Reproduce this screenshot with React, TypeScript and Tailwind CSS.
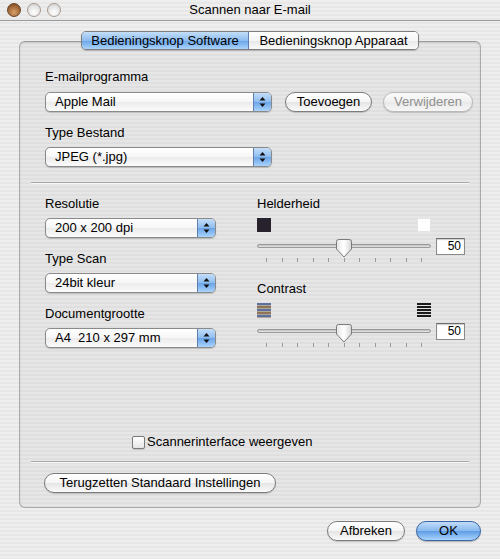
import React from "react";

const font = "font-['Liberation_Sans',Arial,sans-serif]";

function Arrows() {
  return (
    <svg width="7" height="12" viewBox="0 0 7 12">
      <polygon points="3.5,1 6.5,4.5 0.5,4.5" fill="#111" />
      <polygon points="0.5,7.5 6.5,7.5 3.5,11" fill="#111" />
    </svg>
  );
}

function Popup({ label, w }: { label: string; w: string }) {
  return (
    <div
      className={`flex h-[20px] ${w} overflow-hidden rounded-[5px] border border-[#8a8a8a] bg-[image:linear-gradient(#ffffff,#f6f6f6_50%,#ebebeb_51%,#fbfbfb)] shadow-[0_1px_1px_rgba(0,0,0,0.18)]`}
    >
      <span className="flex-1 whitespace-pre pl-[9px] text-[13px] leading-[18px]">{label}</span>
      <span className="flex w-[18px] items-center justify-center border-l border-[#5f7fae] bg-[image:linear-gradient(#c4def8,#8dbcf0_50%,#6aa4e8_51%,#a9d3fb)]">
        <Arrows />
      </span>
    </div>
  );
}

function PushButton({
  children,
  w,
  disabled,
}: {
  children: React.ReactNode;
  w: string;
  disabled?: boolean;
}) {
  return (
    <div
      className={`flex h-[20px] ${w} items-center justify-center rounded-full border text-[13px] leading-[18px] shadow-[0_1px_1px_rgba(0,0,0,0.18)] ${
        disabled
          ? "border-[#b9b9b9] bg-[image:linear-gradient(#fafafa,#f1f1f1_50%,#e9e9e9_51%,#f6f6f6)] text-[#8f8f8f]"
          : "border-[#7c7c7c] bg-[image:linear-gradient(#ffffff,#f5f5f5_50%,#e5e5e5_51%,#fafafa)] text-black"
      }`}
    >
      {children}
    </div>
  );
}

function Separator() {
  return <div className="mx-[11px] h-[2px] border-t border-b border-t-[#a8a8a8] border-b-[#f7f7f7]" />;
}

function Slider() {
  const ticks = [0, 1, 2, 3, 4, 5, 6, 7, 8, 9, 10];
  return (
    <div className="flex flex-col">
      <div className="flex h-[17px] items-center">
        <div className="relative h-[17px] w-[174px]">
          <div className="absolute left-0 right-0 top-[6px] h-[4px] rounded-full border border-[#9a9a9a] bg-[image:linear-gradient(#bdbdbd,#e8e8e8)]" />
          <svg className="absolute left-[79px] top-[1px]" width="16" height="19" viewBox="0 0 16 19">
            <defs>
              <linearGradient id="thumb" x1="0" y1="0" x2="1" y2="0">
                <stop offset="0" stopColor="#e6e6e6" />
                <stop offset="0.5" stopColor="#ffffff" />
                <stop offset="1" stopColor="#d6d6d6" />
              </linearGradient>
            </defs>
            <path
              d="M2.5 0.5 H13.5 Q15.5 0.5 15.5 2.5 V10 L8 18 L0.5 10 V2.5 Q0.5 0.5 2.5 0.5 Z"
              fill="url(#thumb)"
              stroke="#7a7a7a"
            />
          </svg>
        </div>
        <div className="ml-[5px] flex h-[17px] w-[29px] items-center justify-end border border-[#8a8a8a] border-t-[#6e6e6e] bg-white pr-[3px] text-[12px] leading-[15px] shadow-[inset_0_1px_1px_rgba(0,0,0,0.2)]">
          50
        </div>
      </div>
      <div className="mt-[3px] flex w-[174px] justify-between px-[9px]">
        {ticks.map((t) => (
          <span key={t} className="h-[4px] w-px bg-[#9a9a9a]" />
        ))}
      </div>
    </div>
  );
}

function StripeIcon({ dark }: { dark?: boolean }) {
  const rows = [0, 1, 2, 3, 4];
  return (
    <svg width="14" height="15" viewBox="0 0 14 15">
      {rows.map((r) => (
        <rect
          key={r}
          x="0"
          y={r * 3}
          width="14"
          height="2"
          fill={dark ? "#1b1b1b" : r % 2 === 0 ? "#5d6f9c" : "#8f7458"}
        />
      ))}
      {!dark &&
        rows.map((r) => (
          <rect key={"g" + r} x="0" y={r * 3 + 2} width="14" height="1" fill="#b0a69c" />
        ))}
    </svg>
  );
}

function TrafficLight({ red }: { red?: boolean }) {
  return (
    <span
      className={`h-[14px] w-[14px] rounded-full border ${
        red
          ? "border-[#6b4322] bg-[image:radial-gradient(circle_at_50%_70%,#d9a06a,#a46a3a_55%,#6e4320)]"
          : "border-[#a7998f] bg-[image:radial-gradient(circle_at_50%_70%,#ffffff,#e6e6e6_55%,#c9c9c9)]"
      }`}
    />
  );
}

export default function App() {
  return (
    <div
      className={`${font} flex h-[559px] w-[500px] flex-col overflow-hidden bg-[image:repeating-linear-gradient(180deg,#eeeeee_0px,#eeeeee_2px,#e7e7e7_2px,#e7e7e7_4px)] text-black`}
    >
      {/* title bar */}
      <div className="relative flex h-[21px] items-center border-b border-[#9c9c9c] px-[7px]">
        <div className="flex gap-[6px]">
          <TrafficLight red />
          <TrafficLight />
          <TrafficLight />
        </div>
        <div className="absolute inset-0 flex items-center justify-center text-[13px] leading-[16px]">
          Scannen naar E-mail
        </div>
      </div>

      {/* group box */}
      <div className="ml-[19px] mt-[20px] flex h-[467px] w-[462px] flex-col rounded-[6px] border border-[#aaaaaa] border-t-[#9a9a9a] bg-black/[0.03] shadow-[inset_0_1px_2px_rgba(0,0,0,0.1)]">
        <div className="-mt-[11px] flex justify-center">
          <div className="flex h-[19px] overflow-hidden rounded-[5px] border border-[#7d7d7d] text-[13px] leading-[17px] shadow-[0_1px_1px_rgba(0,0,0,0.2)]">
            <div className="flex w-[167px] items-center justify-center border-r border-[#5f7fae] bg-[image:linear-gradient(#c4def8,#8dbcf0_50%,#6aa4e8_51%,#a9d3fb)]">
              Bedieningsknop Software
            </div>
            <div className="flex w-[169px] items-center justify-center bg-[image:linear-gradient(#ffffff,#f5f5f5_50%,#e8e8e8_51%,#fafafa)]">
              Bedieningsknop Apparaat
            </div>
          </div>
        </div>

        <div className="pl-[25px]">
          <div className="mt-[19px] text-[13px] leading-[16px]">E-mailprogramma</div>
          <div className="mt-[7px] flex items-center">
            <Popup label="Apple Mail" w="w-[227px]" />
            <div className="ml-[13px]">
              <PushButton w="w-[87px]">Toevoegen</PushButton>
            </div>
            <div className="ml-[11px]">
              <PushButton w="w-[90px]" disabled>
                Verwijderen
              </PushButton>
            </div>
          </div>
          <div className="mt-[13px] text-[13px] leading-[16px]">Type Bestand</div>
          <div className="mt-[6px]">
            <Popup label="JPEG (*.jpg)" w="w-[227px]" />
          </div>
        </div>

        <div className="mt-[15px]">
          <Separator />
        </div>

        <div className="mt-[12px] flex pl-[25px]">
          <div className="flex w-[212px] flex-col">
            <div className="text-[13px] leading-[16px]">Resolutie</div>
            <div className="mt-[6px]">
              <Popup label="200 x 200 dpi" w="w-[171px]" />
            </div>
            <div className="mt-[13px] text-[13px] leading-[16px]">Type Scan</div>
            <div className="mt-[6px]">
              <Popup label="24bit kleur" w="w-[171px]" />
            </div>
            <div className="mt-[13px] text-[13px] leading-[16px]">Documentgrootte</div>
            <div className="mt-[6px]">
              <Popup label="A4  210 x 297 mm" w="w-[171px]" />
            </div>
          </div>

          <div className="flex flex-col">
            <div className="text-[13px] leading-[16px]">Helderheid</div>
            <div className="mt-[6px] flex w-[174px] justify-between">
              <span className="h-[14px] w-[14px] bg-[#27222c]" />
              <span className="h-[14px] w-[14px] border border-[#e4e4e4] bg-white" />
            </div>
            <div className="mt-[6px]">
              <Slider />
            </div>
            <div className="mt-[19px] text-[13px] leading-[16px]">Contrast</div>
            <div className="mt-[6px] flex w-[174px] justify-between">
              <StripeIcon />
              <StripeIcon dark />
            </div>
            <div className="mt-[5px]">
              <Slider />
            </div>
          </div>
        </div>

        <div className="flex-1" />

        <div className="flex items-center pl-[112px]">
          <span className="h-[13px] w-[13px] rounded-[2px] border border-[#7a7a7a] bg-[image:linear-gradient(#ffffff,#e6e6e6)] shadow-[0_1px_1px_rgba(0,0,0,0.15)]" />
          <span className="ml-[2px] text-[13px] leading-[16px]">Scannerinterface weergeven</span>
        </div>

        <div className="mt-[11px]">
          <Separator />
        </div>

        <div className="mb-[14px] mt-[10px] pl-[24px]">
          <PushButton w="w-[232px]">Terugzetten Standaard Instellingen</PushButton>
        </div>
      </div>

      {/* bottom buttons */}
      <div className="mr-[19px] mt-[13px] flex justify-end gap-[11px]">
        <PushButton w="w-[78px]">Afbreken</PushButton>
        <div className="flex h-[20px] w-[65px] items-center justify-center rounded-full border border-[#3b66a3] bg-[image:linear-gradient(#c2dcf8,#86b8ef_50%,#5f9ce5_51%,#a8d4fc)] text-[13px] leading-[18px] shadow-[0_1px_1px_rgba(0,0,0,0.25)]">
          OK
        </div>
      </div>
    </div>
  );
}
